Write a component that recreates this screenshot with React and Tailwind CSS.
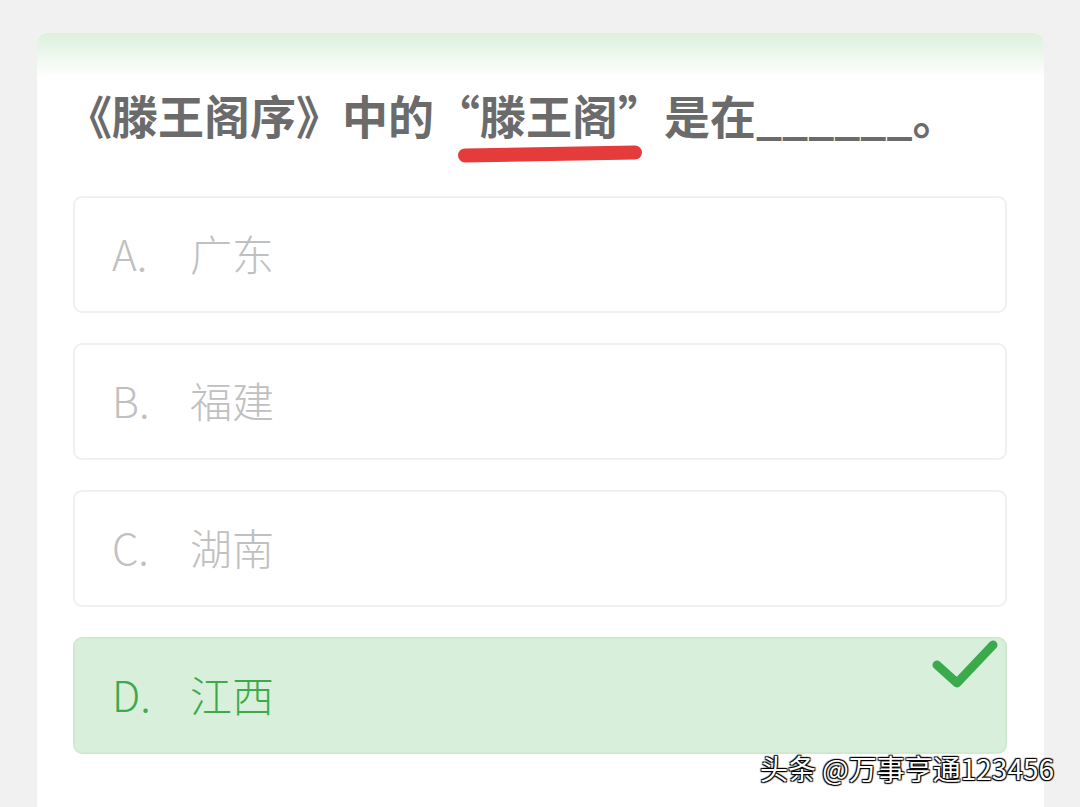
export default function App() {
  const font = { fontFamily: '"Noto Sans CJK SC", "Noto Sans", sans-serif' };
  const opts = [
    { k: "A.", v: "广东" },
    { k: "B.", v: "福建" },
    { k: "C.", v: "湖南" },
  ];
  return (
    <div className="relative w-[1080px] h-[807px] overflow-hidden bg-[#f1f1f1]" style={font}>
      <div className="absolute left-[37px] top-[33px] w-[1007px] h-[800px] rounded-[10px] bg-white overflow-hidden">
        <div className="h-[45px] bg-gradient-to-b from-[#dcf0dd] to-white"></div>
      </div>
      <div className="relative pt-[86px] pl-[83px]">
        <div className="ml-[-17px] text-[46px] font-bold leading-[56px] text-[#6b6b6b] whitespace-nowrap">
          <span>《滕王阁序》中的“</span>
          <span className="relative">
            滕王阁
            <span className="absolute left-[-22px] right-[-24px] top-[66px] h-[14px] rounded-full bg-[#e53b3b] rotate-[-1deg]"></span>
          </span>
          <span>”是在______。</span>
        </div>
        <div className="mt-[54px] ml-[-10px] w-[934px] flex flex-col gap-[30px]">
          {opts.map((o) => (
            <div key={o.k} className="h-[117px] rounded-[9px] border-2 border-[#f0f0f0] flex items-center pl-[37px] pb-[4px] text-[42px] font-light text-[#c0c0c0]">
              <span className="w-[78px]">{o.k}</span>
              <span>{o.v}</span>
            </div>
          ))}
          <div className="relative h-[117px] rounded-[9px] border-2 border-[#d0eacf] bg-[#d8f0db] flex items-center pl-[37px] pb-[4px] text-[42px] font-light text-[#3ea84e]">
            <span className="w-[78px]">D.</span>
            <span>江西</span>
            <svg className="absolute right-[6px] top-[-2px]" width="68" height="52" viewBox="0 0 68 52">
              <polyline points="6,28 26,46 62,8" fill="none" stroke="#3aaa4c" strokeWidth="9" strokeLinecap="round" strokeLinejoin="round" />
            </svg>
          </div>
        </div>
      </div>
      <div className="absolute left-[760px] top-[748px] text-[28px] leading-[40px] text-white whitespace-nowrap [text-shadow:1px_1px_1px_#000,-1px_-1px_1px_#000,1px_-1px_1px_#000,-1px_1px_1px_#000]">
        头条 @万事亨通123456
      </div>
    </div>
  );
}
